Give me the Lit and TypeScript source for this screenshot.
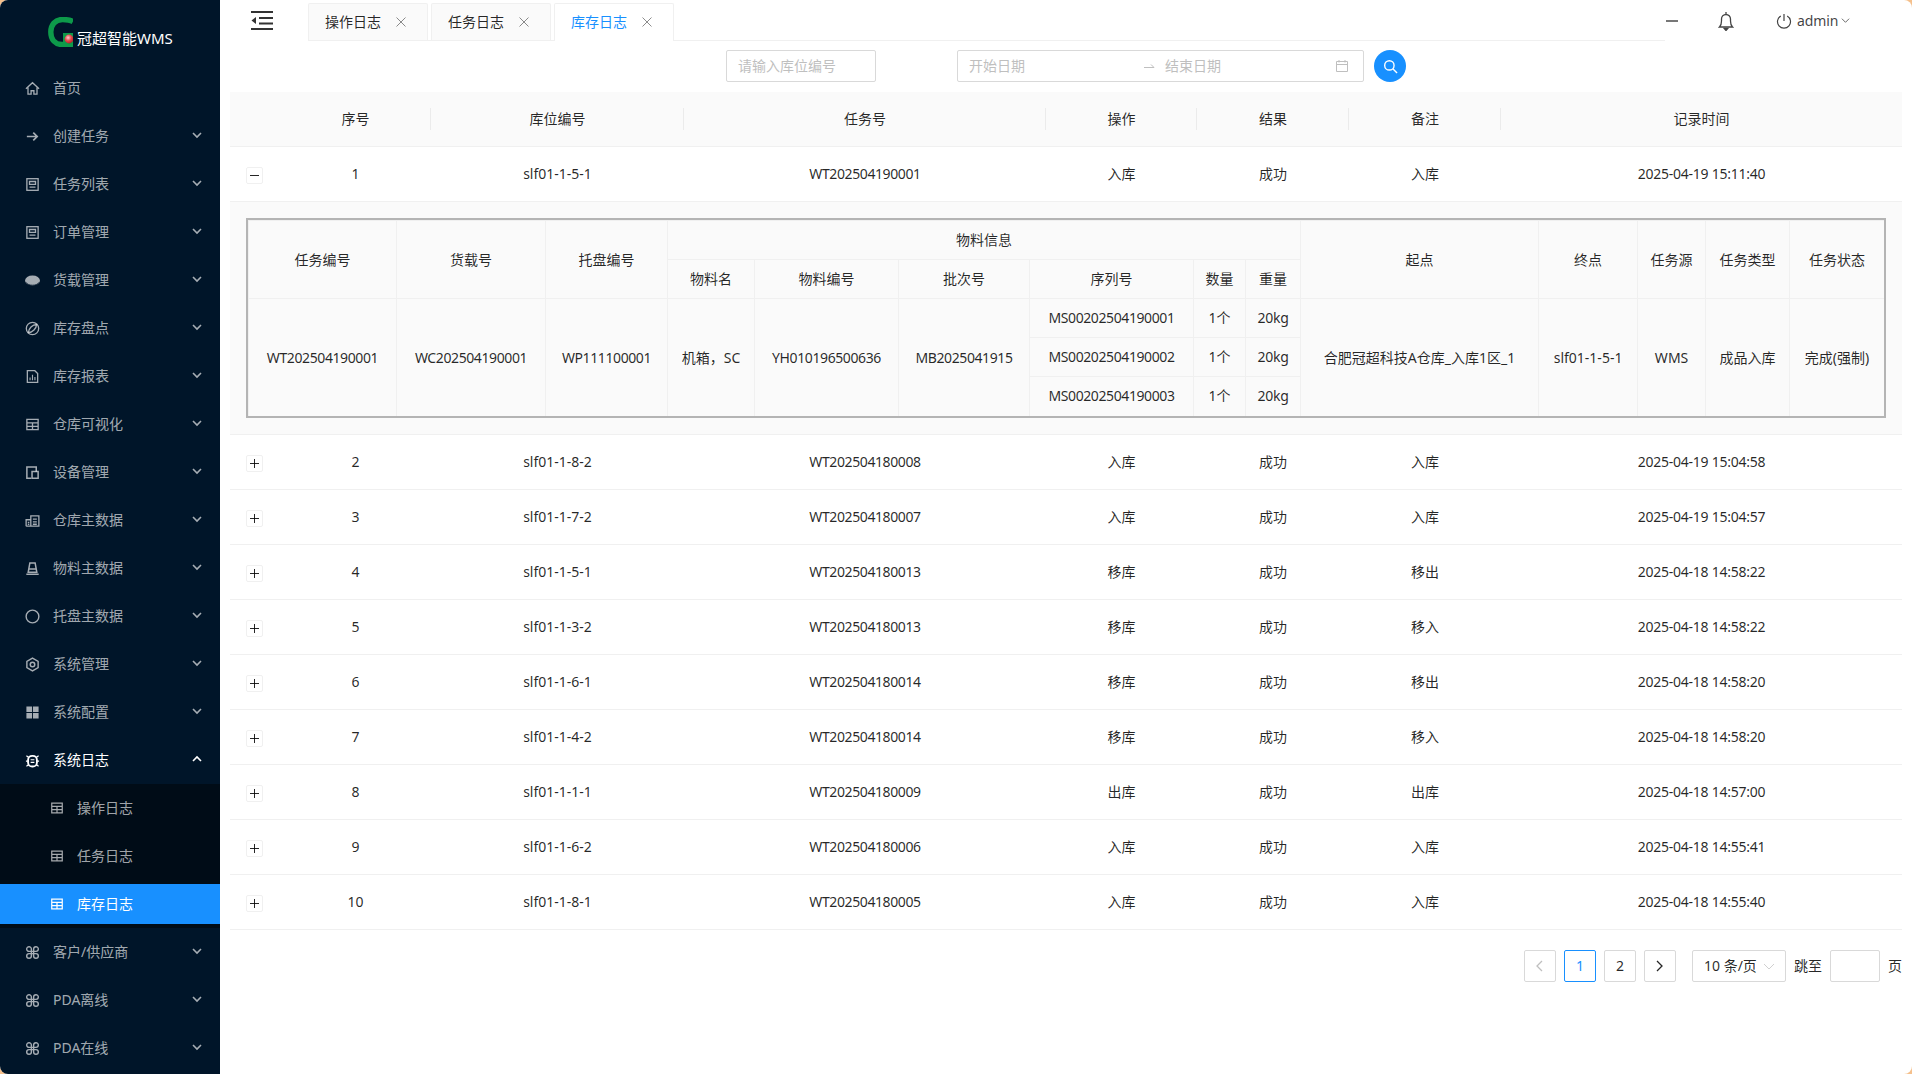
import { LitElement, html, css, svg } from "lit";
import { customElement } from "lit/decorators.js";

const S = (body: any, cls = "ic") => html`<svg class=${cls} viewBox="0 0 16 16" fill="none" stroke="currentColor" stroke-width="1.4">${body}</svg>`;
const icons: Record<string, any> = {
  home: svg`<path d="M1 8.2 8 1.8l7 6.4M3.2 6.8V14h3.3v-3.6h3V14h3.3V6.8"/>`,
  arrow: svg`<path stroke-width="1.8" d="M2 8h11M8.8 3.800 13 8l-4.200 4.200"/>`,
  profile: svg`<rect x="2" y="1.800" width="12" height="12.400"/><path d="M4.800 4.800h6.400v3H4.800zM4.800 10.800h6.400"/>`,
  disc: svg`<ellipse cx="8" cy="8" rx="8" ry="5.400" fill="currentColor" stroke="none"/><path d="M.6 9.600C2 12 5 13 8 13s6-1 7.400-3.400" stroke="#001529" stroke-width=".8"/>`,
  compass: svg`<circle cx="8" cy="8" r="6.600"/><path d="M12.400 3.600C8 3.800 3.800 8 3.600 12.400 8 12.200 12.200 8 12.400 3.600z"/>`,
  report: svg`<path d="M2.500 1.800h8l3 3v9.400h-11z"/><path stroke-width="1.200" d="M5.400 12V9M8 12V6M10.600 12V8.400"/>`,
  table: svg`<path d="M2 2.500h12v11H2zM2 6.200h12M2 9.900h12M8 6.200v7.300"/>`,
  device: svg`<path stroke-width="1.600" d="M6.500 14H2V2h10v5"/><path stroke-width="1.600" d="M7.500 7h6.500v7H7.500z"/>`,
  bars: svg`<path d="M1.200 14V7.200h5M6.200 14V3h8.600v11zM1.200 14h13.600M8.400 6.600h4.200M8.400 9.400h4.200M8.400 12h4.200M3 10h1.600M3 12h1.600"/>`,
  cone: svg`<path stroke-width="1.600" d="M5.200 2h5.600l1.800 10H3.400zM1.400 14h13.200M4.400 8.400h7.200"/>`,
  circle: svg`<circle cx="8" cy="8" r="6.800" stroke-width="1.500"/>`,
  hex: svg`<path stroke-width="1.500" d="M8 1.200 14 4.600v6.800L8 14.800 2 11.400V4.600z"/><circle cx="8" cy="8" r="2.400" stroke-width="1.600"/>`,
  win: svg`<path fill="currentColor" stroke="none" d="M1.500 1.500h6v6h-6zM8.500 1.500h6v6h-6zM1.500 8.500h6v6h-6zM8.500 8.500h6v6h-6z"/>`,
  bug: svg`<rect x="3.300" y="3" width="9.400" height="11.400" rx="4.400" stroke-width="2"/><path stroke-width="1.300" d="M6 7.200h4M6 10h4M1.500 3l2.200 1.600M14.500 3l-2.200 1.600M1 8.700h2M15 8.700h-2M1.500 14.200l2.400-1.600M14.500 14.200l-2.400-1.600"/>`,
  cmd: svg`<path stroke-width="1.500" d="M6.800 6.800H4.300A2.500 2.500 0 1 1 6.800 4.300V11.700A2.500 2.500 0 1 1 4.300 9.200H11.700A2.500 2.500 0 1 1 9.200 11.700V4.300A2.500 2.500 0 1 1 11.700 6.800H6.800"/>`,
};

const menu: [string, string][] = [
  ["创建任务", "arrow"], ["任务列表", "profile"], ["订单管理", "profile"], ["货载管理", "disc"], ["库存盘点", "compass"],
  ["库存报表", "report"], ["仓库可视化", "table"], ["设备管理", "device"], ["仓库主数据", "bars"], ["物料主数据", "cone"],
  ["托盘主数据", "circle"], ["系统管理", "hex"], ["系统配置", "win"],
];
const after: [string, string][] = [["客户/供应商", "cmd"], ["PDA离线", "cmd"], ["PDA在线", "cmd"]];

const rows = [
  ["2", "slf01-1-8-2", "WT202504180008", "入库", "成功", "入库", "2025-04-19 15:04:58"],
  ["3", "slf01-1-7-2", "WT202504180007", "入库", "成功", "入库", "2025-04-19 15:04:57"],
  ["4", "slf01-1-5-1", "WT202504180013", "移库", "成功", "移出", "2025-04-18 14:58:22"],
  ["5", "slf01-1-3-2", "WT202504180013", "移库", "成功", "移入", "2025-04-18 14:58:22"],
  ["6", "slf01-1-6-1", "WT202504180014", "移库", "成功", "移出", "2025-04-18 14:58:20"],
  ["7", "slf01-1-4-2", "WT202504180014", "移库", "成功", "移入", "2025-04-18 14:58:20"],
  ["8", "slf01-1-1-1", "WT202504180009", "出库", "成功", "出库", "2025-04-18 14:57:00"],
  ["9", "slf01-1-6-2", "WT202504180006", "入库", "成功", "入库", "2025-04-18 14:55:41"],
  ["10", "slf01-1-8-1", "WT202504180005", "入库", "成功", "入库", "2025-04-18 14:55:40"],
];
const colW = [50, 151, 253, 362, 151, 152, 152, 401];
const subW = [149, 149, 122, 87, 144, 131, 164, 52, 55, 238, 99, 68, 84, 94];
const heads = ["序号", "库位编号", "任务号", "操作", "结果", "备注", "记录时间"];

const chevron = (up = false) => html`<svg class="chev" viewBox="0 0 10 10" fill="none" stroke="currentColor" stroke-width="1.6"><path d=${up ? "M1 7 5 3l4 4" : "M1 3l4 4 4-4"}/></svg>`;
const closeX = html`<svg class="x" viewBox="0 0 10 10" fill="none" stroke="currentColor" stroke-width="1"><path d="M.5.5l9 9M9.500.5l-9 9"/></svg>`;

@customElement("app-root")
export class AppRoot extends LitElement {
  static styles = css`
    :host { display: block; width: 1912px; height: 1074px; background: #f5c08c; overflow: hidden;
      font-family: "Noto Sans", "Noto Sans CJK SC", sans-serif; font-size: 14px; line-height: 22px; color: rgba(0,0,0,.85); }
    .shell { display: flex; height: 1074px; border-radius: 8px; overflow: hidden; background: #fff; }
    .side { width: 220px; flex: none; background: #001529; color: rgba(255,255,255,.65); display: flex; flex-direction: column; overflow: hidden; }
    .logo { height: 47px; padding: 17px 0 0 48px; display: flex; align-items: flex-start; gap: 4px; flex: none; }
    .logo svg { width: 25px; height: 30px; flex: none; }
    .logo span { color: #fff; font-size: 15px; margin-top: 10px; white-space: nowrap; }
    .mi { height: 40px; margin: 4px 0; display: flex; align-items: center; padding-left: 25px; flex: none; }
    .mi .ic { width: 15px; height: 15px; flex: none; margin-right: 13px; }
    .mi .lb { flex: 1; white-space: nowrap; }
    .chev { width: 10px; height: 10px; flex: none; margin: 0 18px 3px 0; }
    .mi.open { color: #fff; }
    .sub { background: #000c17; display: flex; flex-direction: column; flex: none; }
    .sub .mi { padding-left: 50px; }
    .sub .mi .ic { width: 14px; height: 14px; margin-right: 13px; }
    .sub .mi.on { background: #1890ff; color: #fff; }
    .main { flex: 1; min-width: 0; display: flex; flex-direction: column; }
    .top { height: 41px; display: flex; flex: none; }
    .toggle { width: 88px; flex: none; padding: 11px 0 0 31px; box-sizing: border-box; }
    .toggle svg { display: block; width: 22px; height: 19px; }
    .tabs { flex: 1; display: flex; gap: 3px; align-items: flex-end; border-bottom: 1px solid #f0f0f0; }
    .tab { width: 120px; height: 37px; box-sizing: border-box; border: 1px solid #f0f0f0; border-bottom: 0; border-radius: 2px 2px 0 0; background: #fafafa;
      display: flex; align-items: center; padding-left: 16px; gap: 15px; }
    .tab.on { background: #fff; color: #1890ff; position: relative; height: 38px; margin-bottom: -1px; padding-bottom: 1px; }
    .x { width: 10px; height: 10px; color: rgba(0,0,0,.45); }
    .tools { width: 247px; flex: none; display: flex; align-items: center; padding-left: 1px; box-sizing: border-box; color: rgba(0,0,0,.65); }
    .minus { width: 12px; height: 2px; background: #777; margin-right: 40px; }
    .bell { width: 16px; height: 20px; margin-right: 42px; }
    .pow { width: 16px; height: 16px; margin-right: 5px; }
    .admin { margin-right: 3px; color: rgba(0,0,0,.75); letter-spacing: -.1px; }
    .tools .chev { margin: 0; width: 9px; height: 9px; stroke-width: 1; }
    .filter { display: flex; height: 32px; margin: 9px 0 10px 506px; flex: none; }
    .input { box-sizing: border-box; border: 1px solid #d9d9d9; border-radius: 2px; color: #bfbfbf; height: 32px; display: flex; align-items: center; padding: 0 11px; }
    .code { width: 150px; margin-right: 81px; }
    .range { width: 407px; margin-right: 10px; padding-right: 14px; }
    .range .a { width: 170px; }
    .range .sep { width: 20px; margin-right: 6px; height: 12px; flex: none; }
    .range .b { flex: 1; }
    .range .cal { width: 14px; height: 14px; flex: none; }
    .sbtn { width: 32px; height: 32px; border-radius: 50%; background: #1890ff; color: #fff; display: flex; align-items: center; justify-content: center; }
    .sbtn svg { width: 15px; height: 15px; }
    .wrap { margin: 0 10px; }
    table { border-collapse: separate; border-spacing: 0; table-layout: fixed; width: 100%; }
    .list th { background: #fafafa; font-weight: 400; padding: 16px; border-bottom: 1px solid #f0f0f0; position: relative; text-align: center; }
    .list th.s::before { content: ""; position: absolute; right: 0; top: 16px; width: 1px; height: 22px; background: rgba(0,0,0,.06); }
    .list > tbody > tr > td { padding: 16px; border-bottom: 1px solid #f0f0f0; text-align: center; white-space: nowrap; }
    .list > tbody > tr > td.exp { text-align: left; padding: 16px 0 16px 16px; }
    .n { letter-spacing: -.4px; }
    .d { letter-spacing: -.26px; }
    .eb { display: block; width: 17px; height: 17px; box-sizing: border-box; border: 1px solid #f0f0f0; border-radius: 2px; position: relative; background: #fff; margin-top: 2px; }
    .eb::before { content: ""; position: absolute; left: 3px; right: 3px; top: 7px; height: 1px; background: currentColor; }
    .eb.plus::after { content: ""; position: absolute; top: 3px; bottom: 3px; left: 7px; width: 1px; background: currentColor; }
    .list > tbody > tr > td.det { background: #fafafa; padding: 16px 16px 16px; }
    .nest { border: 2px solid #b4b4b4; width: 1640px; box-sizing: border-box; background: #fafafa; }
    .nest th, .nest td { font-weight: 400; padding: 8px 2px; border-right: 1px solid #f0f0f0; border-bottom: 1px solid #f0f0f0; text-align: center; white-space: nowrap; overflow: hidden; }
    .nest .t { border-top: 1px solid #f0f0f0; }
    .nest .l { border-left: 1px solid #f0f0f0; }
    .nest .r { border-right: 0; }
    .nest .b { border-bottom: 0; }
    .nest .last { padding-bottom: 9px; }
    .pager { display: flex; justify-content: flex-end; align-items: center; margin: 20px 10px 0 0; flex: none; }
    .pg { box-sizing: border-box; width: 32px; height: 32px; border: 1px solid #d9d9d9; border-radius: 2px; display: flex; align-items: center; justify-content: center; margin-right: 8px; }
    .pg svg { width: 10px; height: 12px; }
    .pg.off { color: #bfbfbf; }
    .pg.on { border-color: #1890ff; color: #1890ff; }
    .sel { box-sizing: border-box; width: 94px; height: 32px; border: 1px solid #d9d9d9; border-radius: 2px; display: flex; align-items: center; margin: 0 8px 0 8px; justify-content: space-between; padding: 0 10px 0 11px; white-space: nowrap; }
    .sel svg { width: 12px; height: 12px; color: #d0d0d0; flex: none; }
    .jump { width: 50px; height: 32px; box-sizing: border-box; border: 1px solid #d9d9d9; border-radius: 2px; margin: 0 8px; }
  `;

  private row(r: string[], plus = true) {
    return html`<tr><td class="exp"><span class="eb ${plus ? "plus" : ""}"></span></td>${r.map((c, i) => html`<td class=${i === 2 ? "n" : i === 6 ? "d" : ""}>${c}</td>`)}</tr>`;
  }

  private nested() {
    const ser = ["MS00202504190001", "MS00202504190002", "MS00202504190003"];
    return html`<table class="nest">
      <colgroup>${subW.map((w) => html`<col style="width:${w}px" />`)}</colgroup>
      <thead>
        <tr><th rowspan="2" class="t l">任务编号</th><th rowspan="2" class="t">货载号</th><th rowspan="2" class="t">托盘编号</th><th colspan="6" class="t">物料信息</th><th rowspan="2" class="t">起点</th><th rowspan="2" class="t">终点</th><th rowspan="2" class="t">任务源</th><th rowspan="2" class="t">任务类型</th><th rowspan="2" class="t r">任务状态</th></tr>
        <tr><th>物料名</th><th>物料编号</th><th>批次号</th><th>序列号</th><th>数量</th><th>重量</th></tr>
      </thead>
      <tbody>
        <tr>
          <td rowspan="3" class="b l n">WT202504190001</td><td rowspan="3" class="b n">WC202504190001</td><td rowspan="3" class="b n">WP111100001</td>
          <td rowspan="3" class="b">机箱，SC</td><td rowspan="3" class="b n">YH010196500636</td><td rowspan="3" class="b n">MB2025041915</td>
          <td class="n">${ser[0]}</td><td>1个</td><td class="d">20kg</td>
          <td rowspan="3" class="b">合肥冠超科技A仓库_入库1区_1</td><td rowspan="3" class="b">slf01-1-5-1</td><td rowspan="3" class="b">WMS</td><td rowspan="3" class="b">成品入库</td><td rowspan="3" class="b r">完成(强制)</td>
        </tr>
        <tr><td class="n">${ser[1]}</td><td>1个</td><td class="d">20kg</td></tr>
        <tr><td class="b n last">${ser[2]}</td><td class="b last">1个</td><td class="b d last">20kg</td></tr>
      </tbody>
    </table>`;
  }

  render() {
    const item = ([t, ic]: [string, string]) => html`<div class="mi">${S(icons[ic])}<span class="lb">${t}</span>${chevron()}</div>`;
    const sub = (t: string, on = false) => html`<div class="mi ${on ? "on" : ""}">${S(icons.table)}<span class="lb">${t}</span></div>`;
    return html`<div class="shell">
      <aside class="side">
        <div class="logo">
          <svg viewBox="0 0 25 30" fill="none">
            <defs><radialGradient id="ball" cx=".4" cy=".35" r=".7"><stop offset="0" stop-color="#ffd0d0"/><stop offset=".5" stop-color="#e8484e"/><stop offset="1" stop-color="#b01c22"/></radialGradient></defs>
            <path d="M25 4.600C22 2.800 18 2.500 14.500 2.500 7 2.500 2.800 8 2.800 15 2.800 23 7.500 27.500 14 27.500H25" stroke="#0d9a4a" stroke-width="5.400"/>
            <rect x="15" y="16" width="10" height="14" fill="#0d9a4a"/>
            <circle cx="21" cy="22" r="4.400" fill="url(#ball)"/>
          </svg>
          <span>冠超智能WMS</span>
        </div>
        <div class="mi">${S(icons.home)}<span class="lb">首页</span></div>
        ${menu.map(item)}
        <div class="mi open">${S(icons.bug)}<span class="lb">系统日志</span>${chevron(true)}</div>
        <div class="sub">${sub("操作日志")}${sub("任务日志")}${sub("库存日志", true)}</div>
        ${after.map(item)}
      </aside>
      <main class="main">
        <div class="top">
          <div class="toggle"><svg viewBox="0 0 22 19" fill="none" stroke="#333" stroke-width="2"><path d="M0 1h22M8 7h14M8 12.500h14M0 18h22"/><path d="M5 6v7L0.500 9.500z" fill="#333" stroke="none"/></svg></div>
          <div class="tabs">
            <div class="tab">操作日志${closeX}</div>
            <div class="tab">任务日志${closeX}</div>
            <div class="tab on">库存日志${closeX}</div>
          </div>
          <div class="tools">
            <span class="minus"></span>
            <svg class="bell" viewBox="0 0 16 20" fill="none" stroke="#444" stroke-width="1.300"><path d="M1.500 16h13c-1.500-1.500-2-3-2-6V8a4.500 4.500 0 0 0-9 0v2c0 3-.5 4.500-2 6zM8 1v2.500"/><path d="M6.200 17.500h3.600L8 19.500z" fill="#444"/></svg>
            <svg class="pow" viewBox="0 0 16 16" fill="none" stroke="#444" stroke-width="1.200"><path d="M4.800 3A6.500 6.500 0 1 0 11.200 3M8 1v7"/></svg>
            <span class="admin">admin</span>${chevron()}
          </div>
        </div>
        <div class="filter">
          <div class="input code">请输入库位编号</div>
          <div class="input range">
            <span class="a">开始日期</span>
            <svg class="sep" viewBox="0 0 20 12" fill="none" stroke="#bfbfbf"><path d="M5 7.500h10M12 4.500l3 3"/></svg>
            <span class="b">结束日期</span>
            <svg class="cal" viewBox="0 0 14 14" fill="none" stroke="#bfbfbf"><path d="M1.500 2.500h11v10h-11zM1.500 5.500h11M4 1v2.500M10 1v2.500"/></svg>
          </div>
          <div class="sbtn"><svg viewBox="0 0 16 16" fill="none" stroke="currentColor" stroke-width="1.500"><circle cx="6.800" cy="6.800" r="5"/><path d="M10.500 10.500 15 15"/></svg></div>
        </div>
        <div class="wrap">
          <table class="list">
            <colgroup>${colW.map((w) => html`<col style="width:${w}px" />`)}</colgroup>
            <thead><tr><th></th>${heads.map((h, i) => html`<th class=${i < heads.length - 1 ? "s" : ""}>${h}</th>`)}</tr></thead>
            <tbody>
              ${this.row(["1", "slf01-1-5-1", "WT202504190001", "入库", "成功", "入库", "2025-04-19 15:11:40"], false)}
              <tr><td class="det" colspan="8">${this.nested()}</td></tr>
              ${rows.map((r) => this.row(r))}
            </tbody>
          </table>
        </div>
        <div class="pager">
          <div class="pg off"><svg viewBox="0 0 10 12" fill="none" stroke="currentColor" stroke-width="1.300"><path d="M7 1 2 6l5 5"/></svg></div>
          <div class="pg on">1</div>
          <div class="pg">2</div>
          <div class="pg"><svg viewBox="0 0 10 12" fill="none" stroke="currentColor" stroke-width="1.300"><path d="M2 1l5 5-5 5"/></svg></div>
          <div class="sel"><span>10 条/页</span><svg viewBox="0 0 12 12" fill="none" stroke="currentColor"><path d="M1 4l5 5 5-5"/></svg></div>
          <span>跳至</span><div class="jump"></div><span>页</span>
        </div>
      </main>
    </div>`;
  }
}
